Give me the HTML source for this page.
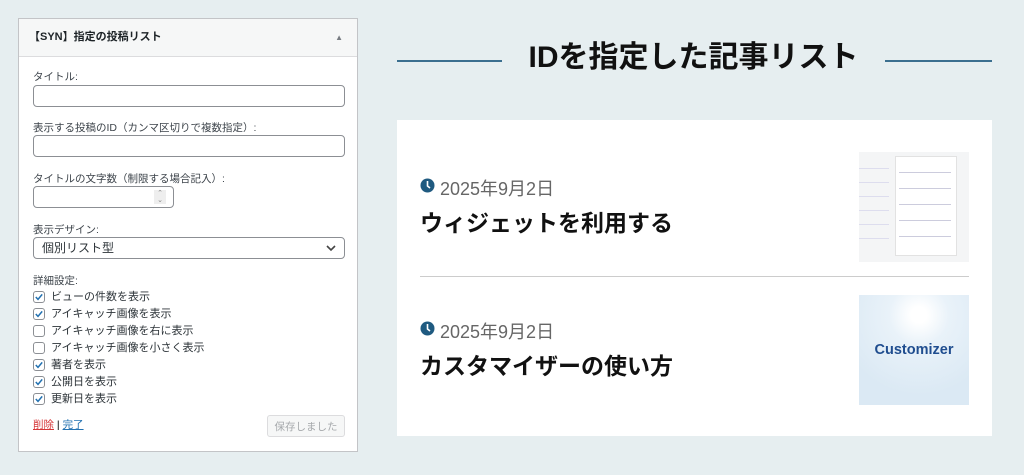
<!DOCTYPE html><html><head><meta charset="utf-8"><style>
body{margin:0;width:1024px;height:475px;background:#e6eef0;font-family:"Liberation Sans","Noto Sans CJK JP",sans-serif;position:relative;overflow:hidden}
.a{position:absolute}
.panel{left:18px;top:18px;width:338px;height:432px;background:#fff;border:1px solid #c3c4c7}
.hd{left:0;top:0;width:338px;height:37px;background:#f6f7f7;border-bottom:1px solid #dcdcde;font-size:11px;font-weight:bold;color:#1d2327;line-height:37px}
.lb{font-size:10.5px;color:#3c434a}
.in{border:1px solid #8c8f94;border-radius:4px;background:#fff;box-sizing:border-box}
.row{height:17px;position:relative;padding-left:18px}
.row svg{position:absolute;left:0;top:2px}
</style></head><body>
<div class="a panel">
<div class="a hd"><span style="margin-left:10px">【SYN】指定の投稿リスト</span><span class="a" style="right:14px;top:0;font-size:8px;color:#787c82">▲</span></div>
<div class="a lb" style="left:14px;top:50px">タイトル:</div>
<div class="a in" style="left:14px;top:66px;width:312px;height:22px"></div>
<div class="a lb" style="left:14px;top:101px">表示する投稿のID（カンマ区切りで複数指定）:</div>
<div class="a in" style="left:14px;top:116px;width:312px;height:22px"></div>
<div class="a lb" style="left:14px;top:152px">タイトルの文字数（制限する場合記入）:</div>
<div class="a in" style="left:14px;top:167px;width:141px;height:22px"><div class="a" style="left:120px;top:3px;width:12px;height:14px;background:#eee;font-size:7px;color:#888;text-align:center;line-height:7px">⌃<br>⌄</div></div>
<div class="a lb" style="left:14px;top:203px">表示デザイン:</div>
<div class="a in" style="left:14px;top:218px;width:312px;height:22px;font-size:12px;color:#2c3338;line-height:20px;padding-left:8px">個別リスト型<svg class="a" style="right:8px;top:7px" width="10" height="7"><path d="M1 1l4 4 4-4" stroke="#444" stroke-width="1.6" fill="none"/></svg></div>
<div class="a lb" style="left:14px;top:254px">詳細設定:</div>
<div class="a" style="left:14px;top:270px;font-size:11px;color:#2c3338;line-height:17px">
<div class="row"><svg width="12" height="12"><rect x=".5" y=".5" width="11" height="11" rx="2.5" fill="#fff" stroke="#8c8f94"/><path d="M2.8 6l2.2 2.4 4.2-5" stroke="#2271b1" stroke-width="1.5" fill="none"/></svg>ビューの件数を表示</div>
<div class="row"><svg width="12" height="12"><rect x=".5" y=".5" width="11" height="11" rx="2.5" fill="#fff" stroke="#8c8f94"/><path d="M2.8 6l2.2 2.4 4.2-5" stroke="#2271b1" stroke-width="1.5" fill="none"/></svg>アイキャッチ画像を表示</div>
<div class="row"><svg width="12" height="12"><rect x=".5" y=".5" width="11" height="11" rx="2.5" fill="#fff" stroke="#8c8f94"/></svg>アイキャッチ画像を右に表示</div>
<div class="row"><svg width="12" height="12"><rect x=".5" y=".5" width="11" height="11" rx="2.5" fill="#fff" stroke="#8c8f94"/></svg>アイキャッチ画像を小さく表示</div>
<div class="row"><svg width="12" height="12"><rect x=".5" y=".5" width="11" height="11" rx="2.5" fill="#fff" stroke="#8c8f94"/><path d="M2.8 6l2.2 2.4 4.2-5" stroke="#2271b1" stroke-width="1.5" fill="none"/></svg>著者を表示</div>
<div class="row"><svg width="12" height="12"><rect x=".5" y=".5" width="11" height="11" rx="2.5" fill="#fff" stroke="#8c8f94"/><path d="M2.8 6l2.2 2.4 4.2-5" stroke="#2271b1" stroke-width="1.5" fill="none"/></svg>公開日を表示</div>
<div class="row"><svg width="12" height="12"><rect x=".5" y=".5" width="11" height="11" rx="2.5" fill="#fff" stroke="#8c8f94"/><path d="M2.8 6l2.2 2.4 4.2-5" stroke="#2271b1" stroke-width="1.5" fill="none"/></svg>更新日を表示</div>
</div>
<div class="a" style="left:14px;top:398px;font-size:10.5px"><span style="color:#d63638;text-decoration:underline">削除</span> | <span style="color:#2271b1;text-decoration:underline">完了</span></div>
<div class="a" style="left:248px;top:396px;width:78px;height:22px;border:1px solid #dcdcde;border-radius:3px;background:#f6f7f7;color:#a7aaad;font-size:10.5px;text-align:center;line-height:22px;box-sizing:border-box">保存しました</div>
</div>
<div class="a" style="left:397px;top:60px;width:105px;height:2px;background:#3b6f8f"></div>
<div class="a" style="left:885px;top:60px;width:107px;height:2px;background:#3b6f8f"></div>
<div class="a" style="left:502px;top:38px;width:383px;text-align:center;font-size:30px;font-weight:bold;color:#111;line-height:40px">IDを指定した記事リスト</div>
<div class="a" style="left:397px;top:120px;width:595px;height:316px;background:#fff"></div>
<svg class="a" style="left:420px;top:178px" width="15" height="15"><circle cx="7.5" cy="7.5" r="7" fill="#1f5a80"/><path d="M7.5 3v5l2.5 2" stroke="#fff" stroke-width="1.6" fill="none"/></svg>
<div class="a" style="left:440px;top:175px;font-size:18px;color:#666">2025年9月2日</div>
<div class="a" style="left:420px;top:204px;font-size:23px;font-weight:bold;color:#111">ウィジェットを利用する</div>
<div class="a" style="left:420px;top:276px;width:549px;height:1px;background:#ccc"></div>
<svg class="a" style="left:420px;top:321px" width="15" height="15"><circle cx="7.5" cy="7.5" r="7" fill="#1f5a80"/><path d="M7.5 3v5l2.5 2" stroke="#fff" stroke-width="1.6" fill="none"/></svg>
<div class="a" style="left:440px;top:318px;font-size:18px;color:#666">2025年9月2日</div>
<div class="a" style="left:420px;top:347px;font-size:23px;font-weight:bold;color:#111">カスタマイザーの使い方</div>
<div class="a" style="left:859px;top:152px;width:110px;height:110px;background:#f4f5f6">
<div class="a" style="left:36px;top:4px;width:60px;height:98px;background:#fff;border:1px solid #e2e2e2"></div>
<div class="a" style="left:0;top:8px;width:30px;height:90px;background:repeating-linear-gradient(#f4f5f6 0 8px,#dde 8px 9px,#f4f5f6 9px 14px)"></div>
<div class="a" style="left:40px;top:12px;width:52px;height:80px;background:repeating-linear-gradient(#fff 0 8px,#ccd 8px 9px,#fff 9px 16px)"></div>
</div>
<div class="a" style="left:859px;top:295px;width:110px;height:110px;background:radial-gradient(circle at 60px 20px,#fff 0,#fff 8px,#e9f2f9 30px,#dbe9f4 80px);color:#1f4d8f;font-size:14.5px;font-weight:bold;text-align:center;line-height:110px">Customizer</div>
</body></html>
